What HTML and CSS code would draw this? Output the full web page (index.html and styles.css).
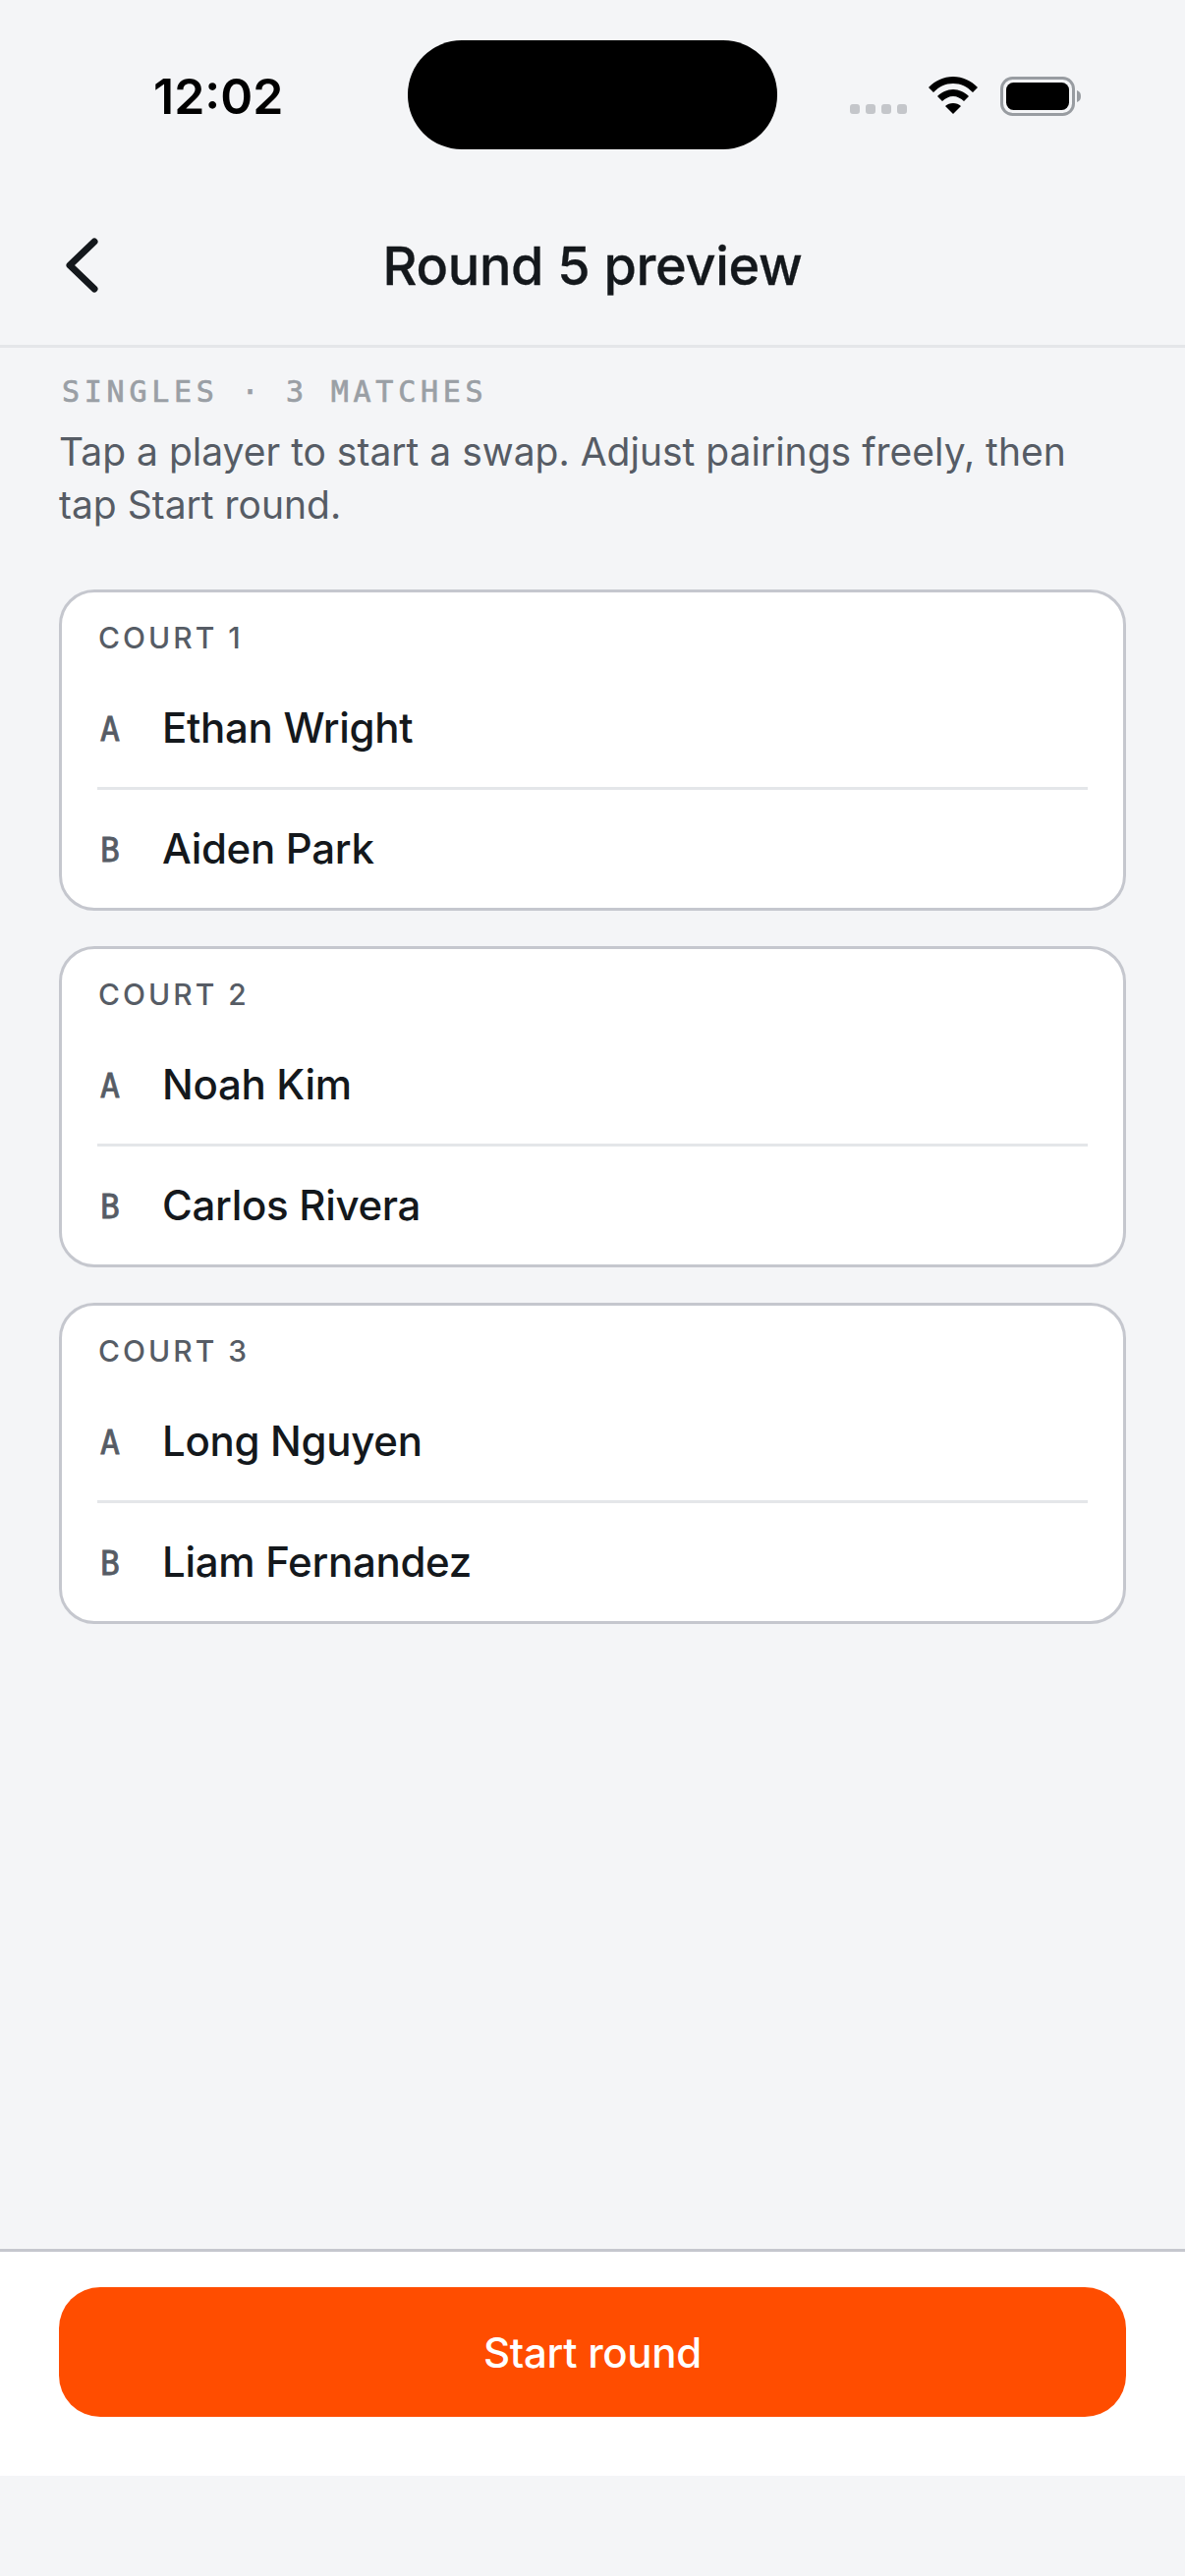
FILE: index.html
```html
<!DOCTYPE html>
<html lang="en">
<head>
<meta charset="utf-8">
<title>Round 5 preview</title>
<link rel="stylesheet" href="styles.css">
</head>
<body>
<div class="screen">
  <div class="status">
    <span class="time">12:02</span>
    <div class="island"></div>
    <div class="status-icons">
      <div class="dots"><i></i><i></i><i></i><i></i></div>
      <svg class="wifi" width="50" height="38" viewBox="0 0 50 38"><path d="M0 11C7 4 15 0 25 0s18 4 25 11l-5 5C39 10 33 7 25 7S11 10 5 16z M9 20c4-4 10-7 16-7s12 3 16 7l-5 5c-3-3-7-5-11-5s-8 2-11 5z M17 30c2-2 5-3 8-3s6 1 8 3l-8 8z" fill="#000"/></svg>
      <svg class="battery" width="84" height="40" viewBox="0 0 84 40"><rect x="1.500" y="1.500" width="73" height="37" rx="11" fill="none" stroke="#989ca1" stroke-width="3"/><rect x="6" y="6" width="64" height="28" rx="7.500" fill="#000"/><path d="M78 14c3 1 4 3 4 6s-1 5-4 6z" fill="#989ca1"/></svg>
    </div>
  </div>
  <header class="topbar">
    <svg class="back" width="42" height="60" viewBox="0 0 42 60"><path d="M32 5 7 29l25 24" fill="none" stroke="#14181c" stroke-width="7" stroke-linecap="round" stroke-linejoin="round"/></svg>
    <h1>Round 5 preview</h1>
  </header>
  <main class="content">
    <p class="eyebrow">SINGLES · 3 MATCHES</p>
    <p class="desc">Tap a player to start a swap. Adjust pairings freely, then tap Start round.</p>
    <section class="card">
      <h2>COURT 1</h2>
      <div class="row"><span class="side">A</span><span class="name">Ethan Wright</span></div>
      <div class="row sep"><span class="side">B</span><span class="name">Aiden Park</span></div>
    </section>
    <section class="card">
      <h2>COURT 2</h2>
      <div class="row"><span class="side">A</span><span class="name">Noah Kim</span></div>
      <div class="row sep"><span class="side">B</span><span class="name">Carlos Rivera</span></div>
    </section>
    <section class="card">
      <h2>COURT 3</h2>
      <div class="row"><span class="side">A</span><span class="name">Long Nguyen</span></div>
      <div class="row sep"><span class="side">B</span><span class="name">Liam Fernandez</span></div>
    </section>
  </main>
  <footer class="footer">
    <button class="start">Start round</button>
  </footer>
</div>
</body>
</html>
```
FILE: styles.css
```css
* { box-sizing: border-box; margin: 0; padding: 0; }
html, body { width: 1206px; height: 2622px; background: #f4f5f7; overflow: hidden; }
body { font-family: Inter, "Liberation Sans", sans-serif; color: #14181c; }
.screen { width: 1206px; height: 2622px; display: flex; flex-direction: column; background: #f4f5f7; padding-bottom: 102px; }
.status { height: 178px; flex: none; position: relative; }
.time { position: absolute; left: 156px; top: 71px; font-size: 50px; line-height: 54px; font-weight: 600; color: #000; }
.island { position: absolute; left: 415px; top: 41px; width: 376px; height: 111px; border-radius: 55px; background: #000; }
.status-icons { position: absolute; left: 865px; top: 78px; display: flex; align-items: flex-start; }
.dots { display: flex; gap: 6px; margin-top: 28px; }
.dots i { width: 10px; height: 10px; border-radius: 3px; background: #c4c6ca; display: block; }
.wifi { margin-left: 22px; }
.battery { margin-left: 23px; }
.topbar { height: 176px; flex: none; border-bottom: 3px solid #e4e6e9; display: flex; align-items: center; justify-content: center; position: relative; padding-top: 12px; }
.topbar h1 { font-size: 54px; font-weight: 500; line-height: 64px; letter-spacing: -0.300px; -webkit-text-stroke: 0.300px #14181c; }
.back { position: absolute; left: 64px; top: 63px; }
.content { flex: 1; padding: 26px 60px 0; }
.eyebrow { font-family: "DejaVu Sans Mono", monospace; font-size: 30px; line-height: 38px; letter-spacing: 4.750px; color: #9a9fa5; -webkit-text-stroke: 0.700px #9a9fa5; padding-left: 3px; }
.desc { margin-top: 15px; font-size: 39px; line-height: 54px; color: #565c65; }
.card { margin-top: 36px; height: 327px; background: #fff; border: 3px solid #c5c7ce; border-radius: 36px; padding: 0 36px; }
.desc + .card { margin-top: 59px; }
.card h2 { font-size: 30px; line-height: 36px; font-weight: 500; letter-spacing: 3px; color: #565c65; padding: 28px 0 0 1px; height: 78px; }
.row { display: flex; align-items: center; height: 120px; }
.sep { border-top: 3px solid #e4e6e9; height: 123px; }
.side { width: 66px; padding: 3px 0 0 3px; font-family: "DejaVu Sans Mono", monospace; font-size: 33px; color: #565c65; -webkit-text-stroke: 0.800px #565c65; }
.name { padding-bottom: 2px; font-size: 42px; font-weight: 500; letter-spacing: -0.300px; color: #14181c; }
.footer { height: 231px; flex: none; background: #fff; border-top: 3px solid #c5c7ce; padding: 36px 60px 0; }
.start { display: block; width: 1086px; height: 132px; border: 0; border-radius: 42px; background: #ff4d00; color: #fff; font: 500 42px Inter, sans-serif; letter-spacing: -0.300px; }
```
